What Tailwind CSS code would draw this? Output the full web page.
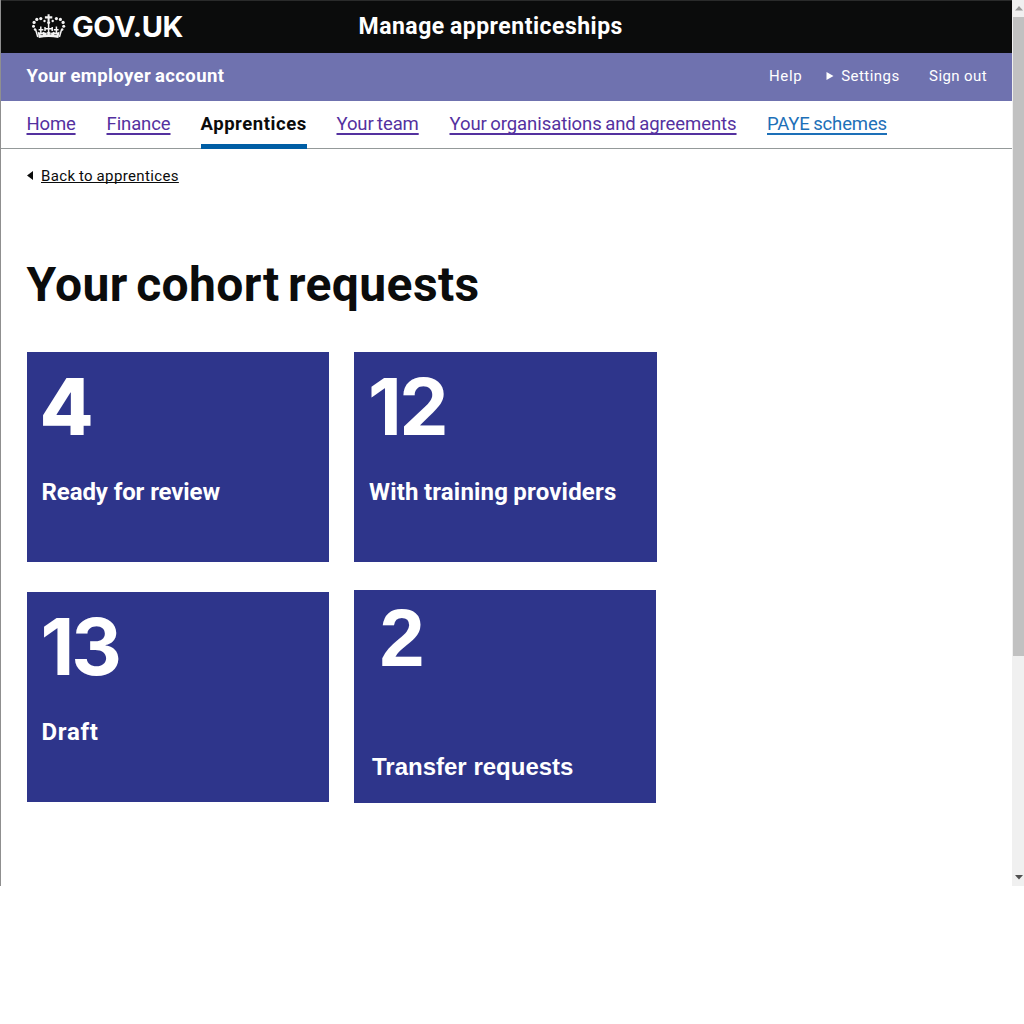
<!DOCTYPE html>
<html lang="en">
<head>
<meta charset="utf-8">
<title>Your cohort requests</title>
<script src="https://cdn.jsdelivr.net/npm/@tailwindcss/browser@4"></script>
</head>
<body class="bg-white font-['Roboto',sans-serif] text-[#0b0c0c] antialiased">
<div class="flex h-[886px] w-[1024px]">
  <div class="flex w-[1012px] flex-col border-l border-[#8f8f8f]">
    <header class="flex h-[53px] items-center border-t border-[#2a2b2b] bg-[#0b0c0c] pl-[30px] text-white">
      <svg class="h-[28px] w-[36px] shrink-0" viewBox="0 0 36 28" fill="#f4f4f4">
        <path d="M16.600 1.200h2v2h2.700v2.200h-2.700v3h-2v-3h-2.700V3.200h2.700z"/>
        <circle cx="17.600" cy="9.600" r="1.500"/>
        <circle cx="13.500" cy="8" r="1.200"/><circle cx="9.800" cy="5.600" r="1.600"/><circle cx="5.800" cy="6.400" r="1.600"/><circle cx="3.100" cy="9.400" r="1.600"/><circle cx="2.500" cy="13.200" r="1.500"/><circle cx="4" cy="16.500" r="1.200"/>
        <circle cx="21.700" cy="8" r="1.200"/><circle cx="25.400" cy="5.600" r="1.600"/><circle cx="29.400" cy="6.400" r="1.600"/><circle cx="32.100" cy="9.400" r="1.600"/><circle cx="32.700" cy="13.200" r="1.500"/><circle cx="31.200" cy="16.500" r="1.200"/>
        <path d="M4.600 16.500l2.200 7.500M30.600 16.500l-2.200 7.500M17.600 10v11M9.800 13.500v7M25.400 13.500v7M7.600 16.700h4.800M22.800 16.700h4.800M14.300 15.800h6.600M14 14v4M21.200 14v4" fill="none" stroke="#f4f4f4" stroke-width="1.500"/>
        <path d="M6.600 18.500c1.500 1.400 4.500 1.600 6 .2 1.700 1.700 3.800 1.300 5-.7 1.200 2 3.300 2.400 5 .7 1.500 1.400 4.500 1.200 6-.2l-1.200 6.500a52 52 0 0 0-19.600 0z"/>
        <path d="M9.500 21.600h2.500M15 21h1.500M18.800 21h1.500M23.200 21.600h2.500" stroke="#0b0c0c" stroke-width=".6"/>
      </svg>
      <span class="ml-[5px] w-[286.5px] font-['Inter',sans-serif] text-[29px] font-bold tracking-[-0.45px]">GOV.UK</span>
      <span class="pt-px text-[23px] font-bold tracking-[0.5px] [word-spacing:-1px]">Manage apprenticeships</span>
    </header>
    <div class="flex h-[48px] items-center bg-[#6f72af] pl-[25.500px] text-white">
      <span class="pb-px text-[18.5px] font-bold tracking-[0.38px] [word-spacing:-1px]">Your employer account</span>
      <nav class="ml-auto flex items-center pr-[25px] pb-[2px] text-[15px]">
        <a class="tracking-[0.6px]">Help</a>
        <svg class="ml-[24px] mr-[7px] h-[8px] w-[8px]" viewBox="0 0 8 8"><path d="M0.500 0L7.500 4 0.500 8z" fill="#fff"/></svg>
        <a class="tracking-[0.45px]">Settings</a>
        <a class="ml-[29.500px] tracking-[0.4px]">Sign out</a>
      </nav>
    </div>
    <nav class="flex h-[48px] items-stretch whitespace-nowrap border-b border-[#949999] pl-[25.5px] text-[18.5px] leading-[47px] text-[#54319f] decoration-[1.5px] underline-offset-[2.5px] [text-decoration-skip-ink:none]">
      <a class="w-[80px] tracking-[-0.18px] underline">Home</a>
      <a class="w-[94px] tracking-[-0.1px] underline">Finance</a>
      <span class="inline-block h-[48px] w-[106.5px] border-b-[5px] border-[#005ea5] font-bold tracking-[0.55px] text-[#0b0c0c]">Apprentices</span>
      <a class="ml-[29.500px] w-[113px] tracking-[-0.12px] underline [word-spacing:-1px]">Your team</a>
      <a class="w-[317.500px] tracking-[-0.07px] underline [word-spacing:-1px]">Your organisations and agreements</a>
      <a class="tracking-[-0.14px] text-[#1d70b8] underline [word-spacing:-1px]">PAYE schemes</a>
    </nav>
    <main class="pl-[25.500px]">
      <a class="flex items-center pt-[17px] text-[15px] leading-5">
        <svg class="mr-[8.5px] mb-[2px] h-[9px] w-[6px]" viewBox="0 0 6 9"><path d="M6 0v9L0 4.500z" fill="#0b0c0c"/></svg>
        <span class="tracking-[0.36px] underline decoration-1 underline-offset-[1px] [text-decoration-skip-ink:none] [word-spacing:-0.500px]">Back to apprentices</span>
      </a>
      <h1 class="mt-[69px] text-[48px] leading-[60px] font-bold tracking-[0.4px] [word-spacing:-4px]">Your cohort requests</h1>
      <div class="mt-[37px] grid grid-cols-[302.5px_302.500px] gap-x-[25px] text-white">
        <section class="h-[210px] bg-[#2e358b] px-[15px] pt-[15px]">
          <div class="-ml-[2px] h-[80px] font-['Inter',sans-serif] text-[78.5px] leading-[80px] font-extrabold">4</div>
          <h2 class="mt-[30px] text-[24px] leading-[30px] font-bold tracking-[-0.1px]">Ready for review</h2>
        </section>
        <section class="h-[210px] bg-[#2e358b] px-[15px] pt-[15px]">
          <div class="-ml-px h-[80px] font-['Inter',sans-serif] text-[78.5px] leading-[80px] font-bold tracking-[-2.5px]">12</div>
          <h2 class="mt-[30px] text-[24px] leading-[30px] font-bold tracking-[0.2px] [word-spacing:-1px]">With training providers</h2>
        </section>
        <section class="mt-[30px] h-[210px] bg-[#2e358b] px-[15px] pt-[15px]">
          <div class="-ml-px h-[80px] font-['Inter',sans-serif] text-[78.5px] leading-[80px] font-bold tracking-[-3px]">13</div>
          <h2 class="mt-[30px] text-[24px] leading-[30px] font-bold tracking-[0.7px]">Draft</h2>
        </section>
        <section class="mt-[28px] h-[213px] w-[302px] bg-[#2e358b] pt-[8px] font-['Liberation_Sans',sans-serif] font-bold">
          <div class="h-[80px] pl-[25.500px] text-[81px] leading-[80px]">2</div>
          <h2 class="mt-[74px] pl-[18px] text-[24px] leading-[30px]">Transfer requests</h2>
        </section>
      </div>
    </main>
  </div>
  <div class="flex w-[12px] flex-col bg-[#f0f0f0] pl-px">
    <div class="flex h-[17px] items-center justify-center"><svg class="h-[5px] w-[8px]" viewBox="0 0 8 5"><path d="M4 0l4 4.500H0z" fill="#9a9a9a"/></svg></div>
    <div class="h-[639px] bg-[#c1c1c1]"></div>
    <div class="mt-auto flex h-[17px] items-center justify-center"><svg class="h-[5px] w-[8px]" viewBox="0 0 8 5"><path d="M0 0h8L4 4.500z" fill="#505050"/></svg></div>
  </div>
</div>
</body>
</html>
